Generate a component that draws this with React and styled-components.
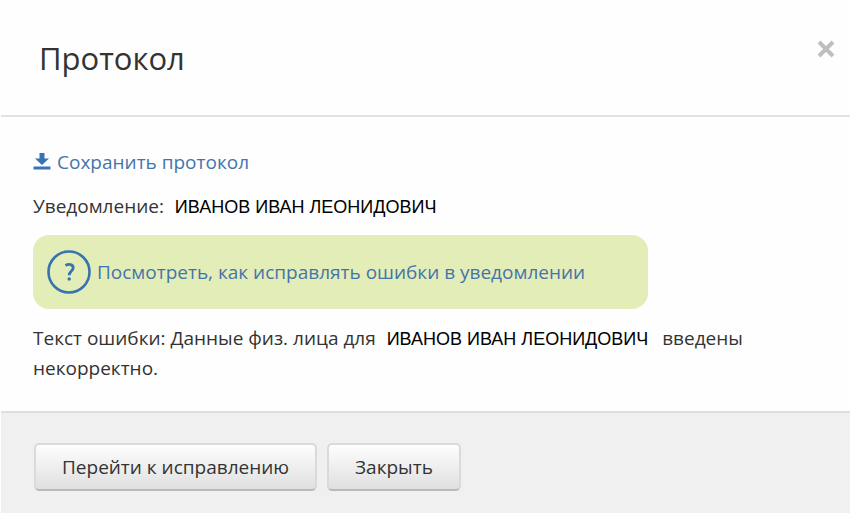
import React, { useState } from "react";
import styled, { createGlobalStyle } from "styled-components";

const GlobalStyle = createGlobalStyle`
    * {
        box-sizing: border-box;
    }

    body {
        margin: 0;
        background-color: #fefefe;
        color: #333;
        font-family: 'Open Sans', 'Noto Sans', sans-serif;
        font-size: 19px;
        line-height: 30px;
    }
`;

const Dialog = styled.section`
    display: flex;
    flex-direction: column;
    min-height: 100vh;
    padding-left: 1px;
`;

const Header = styled.header`
    display: flex;
    justify-content: space-between;
    align-items: flex-start;
    padding: 38px 14px 37px 38px;
    border-bottom: 2px solid #e2e2e2;
`;

const Title = styled.h1`
    margin: 0;
    font-size: 31px;
    font-weight: 400;
    line-height: 40px;
`;

const CloseButton = styled.button`
    display: flex;
    padding: 1px 0;
    border: 0;
    background: none;
    cursor: pointer;
`;

const Body = styled.div`
    flex: 1;
    padding: 30px 32px 12px;
`;

const Link = styled.a`
    display: flex;
    align-items: center;
    gap: 6px;
    width: fit-content;
    color: #4574ab;
    text-decoration: none;

    &:hover {
        text-decoration: underline;
    }
`;

const Text = styled.p`
    max-width: 740px;
    margin: 14px 0;
`;

const Name = styled.span`
    margin: 0 9px 0 6px;
    color: #000;
    font-family: 'Liberation Sans', Arial, sans-serif;
    font-size: 18px;
    line-height: 20px;
`;

const Hint = styled.div`
    display: flex;
    max-width: 615px;
    padding: 15px 14px;
    border-radius: 16px;
    background-color: #e3edb7;
`;

const Footer = styled.footer`
    display: flex;
    gap: 10px;
    padding: 30px 33px 22px;
    border-top: 2px solid #dedede;
    background-color: #f0f0f0;
`;

const Button = styled.button`
    height: 48px;
    padding: 0 26px;
    border: 2px solid #dadada;
    border-bottom-color: #b9b9b9;
    border-radius: 5px;
    background: linear-gradient(#fdfdfd, #e0e0e0);
    color: #333;
    font: inherit;
    cursor: pointer;
`;

const CloseIcon = () => (
    <svg width="20" height="20" viewBox="0 0 20 20" aria-hidden="true">
        <path d="M3 3L17 17M17 3L3 17" stroke="#bfbfbf" strokeWidth="4" />
    </svg>
);

const DownloadIcon = () => (
    <svg width="18" height="18" viewBox="0 0 18 18" fill="#3873b3" aria-hidden="true">
        <path d="M6.5 0h5v5.500h4.500L9 12L2 5.500h4.500zM0.500 13.500h17v3H0.500z" />
    </svg>
);

const HelpIcon = () => (
    <svg width="44" height="44" viewBox="0 0 44 44" fill="none" stroke="#3873b0" aria-hidden="true">
        <circle cx="22" cy="22" r="20.5" strokeWidth="2.6" />
        <path d="M18.5 15.500C21.500 13.700 26.200 14.200 26.200 17.800C26.200 21 22.200 21 22.200 25.300" strokeWidth="2.8" />
        <circle cx="22.2" cy="29" r="1.7" fill="#3873b0" stroke="none" />
    </svg>
);

const App = () => {

    const [open, setOpen] = useState(true);

    const close = () => setOpen(false);

    return (
        <>
            <GlobalStyle />
            {open && (
                <Dialog role="dialog" aria-labelledby="protocol-title">
                    <Header>
                        <Title id="protocol-title">Протокол</Title>
                        <CloseButton onClick={close} aria-label="Закрыть">
                            <CloseIcon />
                        </CloseButton>
                    </Header>
                    <Body>
                        <Link href="#save"><DownloadIcon />Сохранить протокол</Link>
                        <Text>Уведомление: <Name>ИВАНОВ ИВАН ЛЕОНИДОВИЧ</Name></Text>
                        <Hint>
                            <Link href="#help"><HelpIcon />Посмотреть, как исправлять ошибки в уведомлении</Link>
                        </Hint>
                        <Text>
                            Текст ошибки: Данные физ. лица для <Name>ИВАНОВ ИВАН ЛЕОНИДОВИЧ</Name> введены некорректно.
                        </Text>
                    </Body>
                    <Footer>
                        <Button>Перейти к исправлению</Button>
                        <Button onClick={close}>Закрыть</Button>
                    </Footer>
                </Dialog>
            )}
        </>
    );
}

export default App;
